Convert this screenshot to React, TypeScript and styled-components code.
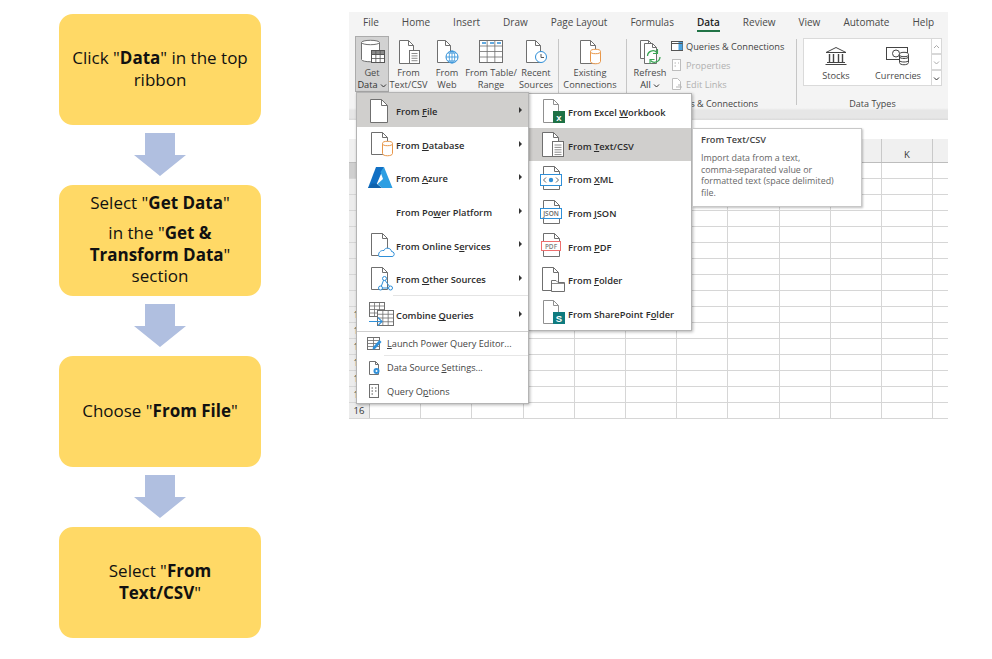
import React from "react"
import styled, { createGlobalStyle } from "styled-components"

const GlobalStyle = createGlobalStyle`
  html, body { margin: 0; padding: 0; background: #fff; }
  body { font-family: "Open Sans", "Noto Sans", sans-serif; }
`

const Page = styled.div`
  display: flex;
  align-items: flex-start;
  width: 992px;
  height: 659px;
  overflow: hidden;
  background: #fff;
`

/* flow chart */
const Flow = styled.div`
  display: flex;
  flex-direction: column;
  width: 202px;
  margin: 14px 0 0 59px;
  flex: none;
`
const StepBox = styled.div`
  height: 111px;
  padding: 0 8px 2px;
  box-sizing: border-box;
  background: #ffd966;
  border-radius: 14px;
  display: flex;
  flex-direction: column;
  justify-content: center;
  text-align: center;
  font-size: 17px;
  line-height: 21.5px;
  color: #111;
  p { margin: 0 0 8.5px; }
  p:last-child { margin: 0; }
  b { font-weight: 700; }
`
const ArrowSvg = styled.svg`
  display: block;
  width: 52px;
  height: 43px;
  margin: 8px auto 9px;
  flex: none;
`
const DownArrow = () => (
  <ArrowSvg viewBox="0 0 52 43">
    <path d="M11 0H41V22H52L26 43L0 22H11Z" fill="#b0bfe0" />
  </ArrowSvg>
)

/* excel */
const Excel = styled.div`
  position: relative;
  width: 599px;
  height: 408px;
  margin: 12px 0 0 88px;
  flex: none;
  overflow: hidden;
  background: #fff;
  color: #444;
`
const TabBar = styled.div`
  display: flex;
  gap: 23px;
  height: 24px;
  box-sizing: border-box;
  padding: 0 0 4px 14px;
  align-items: center;
  background: #f4f4f4;
  font-size: 10px;
`
const Tab = styled.span<{ $active?: boolean }>`
  position: relative;
  white-space: nowrap;
  color: ${p => (p.$active ? "#222" : "#4a4a4a")};
  font-weight: ${p => (p.$active ? 600 : 400)};
  ${p =>
    p.$active &&
    `&::after { content: ""; position: absolute; left: 0; right: 0; bottom: -3px; height: 2px; background: #217346; }`}
`
const Ribbon = styled.div`
  display: flex;
  height: 72px;
  padding-left: 6px;
  background: #f4f4f4;
`
const Group = styled.div<{ $width: number }>`
  display: flex;
  flex-direction: column;
  width: ${p => p.$width}px;
  flex: none;
`
const GroupBody = styled.div`
  display: flex;
  height: 56px;
  flex: none;
`
const GroupLabel = styled.div<{ $pad?: number; $top?: number }>`
  height: 16px;
  line-height: 16px;
  margin-top: ${p => p.$top ?? 4}px;
  text-align: center;
  font-size: 9px;
  white-space: nowrap;
  padding-right: ${p => p.$pad ?? 0}px;
  color: #444;
`
const GroupRule = styled.div<{ $mr: number; $ml: number }>`
  width: 1px;
  height: 66px;
  margin: 3px ${p => p.$mr}px 0 ${p => p.$ml}px;
  background: #c6c6c6;
  flex: none;
`
const RibbonButton = styled.div<{ $width: number; $active?: boolean }>`
  width: ${p => p.$width}px;
  flex: none;
  box-sizing: border-box;
  display: flex;
  flex-direction: column;
  align-items: center;
  padding-top: 1px;
  font-size: 9.2px;
  line-height: 12.2px;
  text-align: center;
  white-space: nowrap;
  color: #4a4a4a;
  background: ${p => (p.$active ? "#d2d2d2" : "transparent")};
  box-shadow: ${p => (p.$active ? "inset 0 0 0 1px #ababab" : "none")};
  > svg { display: block; flex: none; }
`
const DropLine = styled.div`
  display: flex;
  align-items: center;
  gap: 2px;
  color: #333;
`
const SmallCommands = styled.div`
  display: flex;
  flex-direction: column;
  gap: 3px;
  padding: 2px 0 0 2px;
`
const SmallCommand = styled.div<{ $off?: boolean }>`
  display: flex;
  align-items: center;
  gap: 2px;
  height: 17px;
  font-size: 9.2px;
  white-space: nowrap;
  color: ${p => (p.$off ? "#b0b0b0" : "#444")};
`
const Gallery = styled.div`
  display: flex;
  width: 139px;
  height: 48px;
  margin-top: 2px;
  background: #fff;
  box-shadow: inset 0 0 0 1px #dadada;
  flex: none;
`
const GalleryItem = styled.div<{ $width: number }>`
  width: ${p => p.$width}px;
  flex: none;
  display: flex;
  flex-direction: column;
  align-items: center;
  padding-top: 8px;
  font-size: 9.2px;
  line-height: 12px;
  color: #4a4a4a;
  svg { display: block; margin-bottom: 4px; }
`
const GalleryScroll = styled.div`
  margin-left: auto;
  width: 11px;
  display: flex;
  flex-direction: column;
`
const ScrollBtn = styled.div<{ $dark?: boolean }>`
  height: 16px;
  box-sizing: border-box;
  border: 1px solid #d8d8d8;
  display: flex;
  align-items: center;
  justify-content: center;
  color: ${p => (p.$dark ? "#333" : "#aaa")};
  svg { display: block; }
`
const RibbonFoot = styled.div`
  height: 12px;
  background: linear-gradient(#f4f4f4 0, #e6e6e6 20%, #e6e6e6 80%, #d9d9d9 100%);
`
const FormulaStrip = styled.div`
  height: 19px;
  background: #fff;
`
const SheetHead = styled.div`
  display: grid;
  grid-template-columns: 21px repeat(12, 51.2px);
  height: 24px;
  background: #f0f0f0;
  border-bottom: 1px solid #bdbdbd;
  box-sizing: border-box;
`
const HeadCell = styled.div`
  padding-top: 9px;
  text-align: center;
  font-size: 9.5px;
  line-height: 14px;
  color: #333;
  border-right: 1px solid #c9c9c9;
`
const SheetRow = styled.div`
  display: grid;
  grid-template-columns: 21px repeat(12, 51.2px);
  height: 16px;
  box-sizing: border-box;
  border-bottom: 1px solid #d6d6d6;
`
const RowNum = styled.div<{ $sel?: boolean }>`
  background: ${p => (p.$sel ? "#cfcfcf" : "#ececec")};
  border-right: 1px solid #c4c4c4;
  font-size: 9.5px;
  line-height: 15px;
  text-align: center;
  color: #333;
`
const Cell = styled.div`
  border-right: 1px solid #d6d6d6;
`

/* menus */
const Menu = styled.div<{ $left: number; $top: number; $width: number; $height: number }>`
  position: absolute;
  left: ${p => p.$left}px;
  top: ${p => p.$top}px;
  width: ${p => p.$width}px;
  height: ${p => p.$height}px;
  box-sizing: border-box;
  background: #fff;
  border: 1px solid #b4b4b4;
  box-shadow: 1px 1px 3px rgba(0, 0, 0, 0.3);
`
const MenuItem = styled.div<{ $on?: boolean; $pad: number }>`
  position: relative;
  display: flex;
  align-items: center;
  height: 33.6px;
  padding-left: ${p => p.$pad}px;
  background: ${p => (p.$on ? "#d0cfcd" : "transparent")};
  font-size: 9.3px;
  font-weight: 600;
  color: #2b2b2b;
  white-space: nowrap;
  svg { display: block; flex: none; }
  span { padding-top: 4px; }
`
const Caret = styled.i`
  position: absolute;
  right: 6px;
  top: 14px;
  width: 0;
  height: 0;
  border-left: 3px solid #333;
  border-top: 3px solid transparent;
  border-bottom: 3px solid transparent;
`
const ItemRule = styled.div`
  height: 1px;
  margin: 0 0 1.5px 36px;
  background: #e4e4e4;
`
const MenuFoot = styled.div`
  border-top: 1px solid #cfcfcf;
`
const FootItem = styled.div`
  display: flex;
  align-items: center;
  gap: 5px;
  height: 23.4px;
  padding-left: 9px;
  font-size: 9.2px;
  color: #444;
  white-space: nowrap;
  svg { display: block; flex: none; }
`
const FootRule = styled.div`
  height: 1px;
  margin-left: 27px;
  background: #e6e6e6;
`
const Tip = styled.div`
  position: absolute;
  left: 343px;
  top: 116px;
  width: 170px;
  height: 79px;
  box-sizing: border-box;
  padding: 4px 8px;
  background: #fff;
  border: 1px solid #c8c8c8;
  box-shadow: 1px 1px 2px rgba(0, 0, 0, 0.25);
`
const TipTitle = styled.div`
  font-size: 9.2px;
  font-weight: 600;
  line-height: 13px;
  margin-bottom: 6px;
  color: #444;
`
const TipText = styled.div`
  font-size: 8.9px;
  line-height: 11.7px;
  color: #666;
`
const Key = styled.u`
  text-underline-offset: 1px;
`

/* drawings */
const G = "#6f6f6f"
const DocShape = ({ x, y, w, h, f = 5, c = G }: { x: number; y: number; w: number; h: number; f?: number; c?: string }) => (
  <>
    <path
      d={`M${x} ${y}H${x + w - f}L${x + w} ${y + f}V${y + h}H${x}Z`}
      fill="#fff"
      stroke={c}
      strokeLinejoin="round"
    />
    <path d={`M${x + w - f} ${y}V${y + f}H${x + w}`} fill="none" stroke={c} />
  </>
)
const Cylinder = ({ x, y, w, h, c }: { x: number; y: number; w: number; h: number; c: string }) => (
  <>
    <path
      d={`M${x} ${y + 2}V${y + h - 2}C${x} ${y + h + 1} ${x + w} ${y + h + 1} ${x + w} ${y + h - 2}V${y + 2}`}
      fill="#fff"
      stroke={c}
    />
    <ellipse cx={x + w / 2} cy={y + 2} rx={w / 2} ry={2.2} fill="#fff" stroke={c} />
  </>
)
const TableShape = ({ x, y, w, h, cols, rows, c = G, head }: { x: number; y: number; w: number; h: number; cols: number; rows: number; c?: string; head?: string }) => {
  const v = Array.from({ length: cols - 1 }, (_, i) => x + ((i + 1) * w) / cols)
  const r = Array.from({ length: rows - 1 }, (_, i) => y + ((i + 1) * h) / rows)
  return (
    <>
      <rect x={x} y={y} width={w} height={h} fill="#fff" stroke={c} />
      {head && <rect x={x} y={y} width={w} height={h / rows} fill={head} stroke={c} />}
      {v.map(a => <path key={a} d={`M${a} ${y}V${y + h}`} stroke={c} strokeWidth=".8" />)}
      {r.map(a => <path key={a} d={`M${x} ${a}H${x + w}`} stroke={c} strokeWidth=".8" />)}
    </>
  )
}
const Ic = ({ children, w = 32, h = 28 }: { children: React.ReactNode; w?: number; h?: number }) => (
  <svg width={w} height={h} viewBox={`0 0 ${w} ${h}`}>{children}</svg>
)
const BLUE = "#2f8fd8"
const Lines = ({ x, y, n, w }: { x: number; y: number; n: number; w: number }) => (
  <>{Array.from({ length: n }, (_, i) => <path key={i} d={`M${x} ${y + i * 2.4}H${x + w}`} stroke={G} strokeWidth=".8" />)}</>
)

const IconFile = () => <Ic><DocShape x={6.5} y={3.5} w={17} h={23} f={6} /></Ic>
const IconDatabase = () => <Ic><DocShape x={7.5} y={3.5} w={16} h={22} f={5} /><Cylinder x={18.5} y={12.5} w={10} h={14} c="#e8974a" /></Ic>
const IconAzure = () => (
  <Ic>
    <path d="M12 4H20L11 25H4Z" fill="#1170c4" />
    <path d="M20 4L28.5 25H18L13.5 21L19 16L16.5 9Z" fill="#2d9fe3" />
    <path d="M4 25L11 25L18 25L12.5 20.5H8Z" fill="#0f62ad" />
  </Ic>
)
const IconBlank = () => <Ic>{null}</Ic>
const IconOnline = () => (
  <Ic>
    <DocShape x={7.5} y={3.5} w={16} h={22} f={5} />
    <path d="M15 26.5H28C31 26.5 31 21.5 27.5 21.5C27 17.5 21 17 20 20.5C16.5 20 13.5 23 15 26.5Z" fill="#fff" stroke={BLUE} />
  </Ic>
)
const IconOther = () => (
  <Ic>
    <DocShape x={7.5} y={3.5} w={16} h={22} f={5} />
    <path d="M20 15L17 23M20 15L26 23M17 24H26" stroke={BLUE} fill="none" />
    <circle cx="20.5" cy="14.5" r="2" fill="#fff" stroke={BLUE} />
    <circle cx="16.5" cy="24" r="2" fill="#fff" stroke={BLUE} />
    <circle cx="26.5" cy="24" r="2" fill="#fff" stroke={BLUE} />
  </Ic>
)
const IconCombine = () => (
  <Ic>
    <TableShape x={5.5} y={2.5} w={15} h={14} cols={3} rows={4} />
    <TableShape x={13.5} y={10.5} w={16} h={15} cols={3} rows={4} />
    <path d="M5 21.5H18M14 17.5L18 21.5L14 25.5" fill="none" stroke={BLUE} strokeWidth="1.1" />
  </Ic>
)
const IconExcel = () => (
  <Ic>
    <DocShape x={7.5} y={2.5} w={15} h={23} f={5} c="#909090" />
    <rect x="17" y="14" width="12" height="12" fill="#1e7145" />
    <text x="23" y="24" textAnchor="middle" fontSize="9.5" fontWeight="700" fill="#fff" fontFamily="Liberation Sans, sans-serif">x</text>
  </Ic>
)
const IconText = () => (
  <Ic>
    <DocShape x={6.5} y={2.5} w={16} h={24} f={5} />
    <rect x="16.5" y="11.5" width="11" height="15" fill="#fff" stroke={G} />
    <Lines x={18.5} y={15} n={5} w={7} />
  </Ic>
)
const IconXml = () => (
  <Ic>
    <DocShape x={7.5} y={2.5} w={16} h={23} f={5} />
    <rect x="4.5" y="10.5" width="21" height="11" fill="#fff" stroke={BLUE} />
    <circle cx="15" cy="16" r="2.2" fill={BLUE} />
    <path d="M10 13.5L7.5 16L10 18.5M20 13.5L22.5 16L20 18.5" fill="none" stroke="#555" strokeWidth=".9" />
  </Ic>
)
const IconJson = () => (
  <Ic>
    <DocShape x={7.5} y={2.5} w={16} h={23} f={5} />
    <rect x="4.5" y="10.5" width="21" height="10" fill="#fff" stroke={BLUE} />
    <text x="15" y="18" textAnchor="middle" fontSize="6.5" fill="#666" fontFamily="Open Sans, sans-serif">JSON</text>
  </Ic>
)
const IconPdf = () => (
  <Ic>
    <DocShape x={7.5} y={2.5} w={16} h={23} f={5} />
    <rect x="5.5" y="10.5" width="19" height="9" fill="#fff" stroke="#ee6f6f" />
    <text x="15" y="17.5" textAnchor="middle" fontSize="6.5" fill="#808080" fontFamily="Open Sans, sans-serif">PDF</text>
  </Ic>
)
const IconFolder = () => (
  <Ic>
    <DocShape x={6.5} y={2.5} w={16} h={23} f={5} />
    <path d="M15.5 15.5H20L22 17.5H28.5V26.5H15.5Z" fill="#fff" stroke={G} />
    <path d="M15.5 18.5H28.5" stroke={G} strokeWidth=".8" />
  </Ic>
)
const IconShare = () => (
  <Ic>
    <DocShape x={7.5} y={2.5} w={15} h={23} f={5} c="#909090" />
    <rect x="17" y="14" width="12" height="12" fill="#0f7b7f" />
    <text x="23" y="24" textAnchor="middle" fontSize="9.5" fontWeight="700" fill="#fff" fontFamily="Liberation Sans, sans-serif">S</text>
  </Ic>
)
const IconEditor = () => (
  <svg width="16" height="16" viewBox="0 0 16 16">
    <TableShape x={1.5} y={2.5} w={12} h={12} cols={2} rows={4} />
    <path d="M7 12L13.5 5L15.5 7L9 14L6.5 14.5Z" fill={BLUE} />
  </svg>
)
const IconSettings = () => (
  <svg width="16" height="16" viewBox="0 0 16 16">
    <DocShape x={3.5} y={1.5} w={9} h={13} f={3} />
    <circle cx="10.5" cy="11" r="3" fill={BLUE} />
    <circle cx="10.5" cy="11" r="1" fill="#fff" />
  </svg>
)
const IconOptions = () => (
  <svg width="16" height="16" viewBox="0 0 16 16">
    <rect x="3.5" y="1.5" width="9" height="13" fill="#fff" stroke={G} />
    <path d="M5.5 5H7M9 5H10.5M5.5 8H7M9 8H10.5M5.5 11H7" stroke="#555" />
  </svg>
)
const IconGetData = () => (
  <svg width="30" height="30" viewBox="0 0 30 30">
    <Cylinder x={4.5} y={3.5} w={18} h={21} c={G} />
    <TableShape x={14.5} y={13.5} w={13} h={12} cols={3} rows={3} c="#555" head="#8a8a8a" />
  </svg>
)
const IconTextCsv = () => (
  <svg width="30" height="30" viewBox="0 0 30 30">
    <DocShape x={5.5} y={3.5} w={14} h={23} f={5} />
    <rect x="15.5" y="13.5" width="10" height="13" fill="#fff" stroke={G} />
    <Lines x={17.5} y={16.5} n={4} w={6} />
  </svg>
)
const IconWeb = () => (
  <svg width="30" height="30" viewBox="0 0 30 30">
    <DocShape x={5.5} y={3.5} w={13} h={22} f={5} />
    <circle cx="20" cy="20" r="6" fill="#fff" stroke={BLUE} />
    <path d="M14 20H26M20 14V26M16 16H24M16 24H24" stroke={BLUE} strokeWidth=".8" />
    <ellipse cx="20" cy="20" rx="2.8" ry="6" fill="none" stroke={BLUE} strokeWidth=".8" />
  </svg>
)
const IconTable = () => (
  <svg width="30" height="30" viewBox="0 0 30 30">
    <TableShape x={3.5} y={3.5} w={23} h={22} cols={3} rows={4} />
    <path d="M6 6H10M14 6H18M21 6H25" stroke={BLUE} strokeWidth="1.6" />
  </svg>
)
const IconRecent = () => (
  <svg width="30" height="30" viewBox="0 0 30 30">
    <DocShape x={5.5} y={3.5} w={14} h={22} f={5} />
    <circle cx="20" cy="20" r="5.5" fill="#fff" stroke={BLUE} />
    <path d="M20 17V20.5H23" fill="none" stroke="#555" />
  </svg>
)
const IconExisting = () => (
  <svg width="30" height="30" viewBox="0 0 30 30">
    <DocShape x={5.5} y={3.5} w={15} h={23} f={5} />
    <Cylinder x={15.5} y={12.5} w={10} h={14} c="#e8974a" />
  </svg>
)
const IconRefresh = () => (
  <svg width="30" height="30" viewBox="0 0 30 30">
    <DocShape x={5.5} y={3.5} w={12} h={18} f={4} />
    <DocShape x={9.5} y={6.5} w={12} h={20} f={4} />
    <path d="M12.5 19A5.5 5.5 0 0 1 22 15.5M25 20A5.5 5.5 0 0 1 15.5 23.5" fill="none" stroke="#3aa655" strokeWidth="1.3" />
    <path d="M22.5 12V16.5H18M15 27V22.5H19.5" fill="none" stroke="#3aa655" strokeWidth="1.1" />
  </svg>
)
const IconQueries = () => (
  <svg width="14" height="14" viewBox="0 0 14 14">
    <rect x="1.5" y="2.5" width="11" height="9" fill="#fff" stroke="#555" />
    <rect x="8.5" y="3" width="4" height="8" fill="#4ba3e0" />
    <path d="M1.5 4.5H12.5" stroke="#555" />
  </svg>
)
const IconProps = () => (
  <svg width="14" height="14" viewBox="0 0 14 14">
    <rect x="2.5" y="1.5" width="8" height="11" fill="#fff" stroke="#bdbdbd" />
    <path d="M4.5 5H6M8 5H9M4.5 8H6" stroke="#b5b5b5" />
  </svg>
)
const IconLinks = () => (
  <svg width="14" height="14" viewBox="0 0 14 14">
    <path d="M2.5 1.5H7.5L10.5 4.5V12.5H2.5Z" fill="#fff" stroke="#bdbdbd" />
    <path d="M6 10H12M8 8H11" stroke="#b5b5b5" />
  </svg>
)
const IconBank = () => (
  <svg width="24" height="20" viewBox="0 0 24 20">
    <path d="M2 6.5L12 1.5L22 6.5Z" fill="#fff" stroke="#444" />
    <path d="M5.5 8V16M9.5 8V16M14.5 8V16M18.5 8V16" stroke="#444" strokeWidth="1.4" />
    <path d="M3 16.5H21M1.5 18.5H22.5" stroke="#444" />
  </svg>
)
const IconCurrency = () => (
  <svg width="26" height="20" viewBox="0 0 26 20">
    <rect x="1.5" y="1.5" width="21" height="12" fill="#fff" stroke="#444" />
    <circle cx="11" cy="7.5" r="3.5" fill="none" stroke="#444" />
    <Cylinder x={14.5} y={6.5} w={9} h={12} c="#444" />
    <path d="M14.5 11C15 13 23 13 23.5 11M14.5 14.5C15 16.5 23 16.5 23.5 14.5" fill="none" stroke="#444" />
  </svg>
)
const Chevron = ({ up }: { up?: boolean }) => (
  <svg width="7" height="5" viewBox="0 0 7 5">
    <path d={up ? "M1 4L3.5 1.5L6 4" : "M1 1.5L3.5 4L6 1.5"} fill="none" stroke="currentColor" />
  </svg>
)

const tabs = ["File", "Home", "Insert", "Draw", "Page Layout", "Formulas", "Data", "Review", "View", "Automate", "Help"]
const columns = "ABCDEFGHIJKL".split("")

const mainItems: [React.ReactNode, React.ReactNode][] = [
  [<IconFile />, <>From <Key>F</Key>ile</>],
  [<IconDatabase />, <>From <Key>D</Key>atabase</>],
  [<IconAzure />, <>From <Key>A</Key>zure</>],
  [<IconBlank />, <>From Po<Key>w</Key>er Platform</>],
  [<IconOnline />, <>From Online S<Key>e</Key>rvices</>],
  [<IconOther />, <>From <Key>O</Key>ther Sources</>],
]
const subItems: [React.ReactNode, React.ReactNode][] = [
  [<IconExcel />, <>From Excel <Key>W</Key>orkbook</>],
  [<IconText />, <>From <Key>T</Key>ext/CSV</>],
  [<IconXml />, <>From <Key>X</Key>ML</>],
  [<IconJson />, <>From <Key>J</Key>SON</>],
  [<IconPdf />, <>From <Key>P</Key>DF</>],
  [<IconFolder />, <>From <Key>F</Key>older</>],
  [<IconShare />, <>From SharePoint F<Key>o</Key>lder</>],
]

export default function App() {
  return (
    <Page>
      <GlobalStyle />
      <Flow>
        <StepBox><p>Click "<b>Data</b>" in the top ribbon</p></StepBox>
        <DownArrow />
        <StepBox>
          <p>Select "<b>Get Data</b>"</p>
          <p>in the "<b>Get &amp; Transform Data</b>" section</p>
        </StepBox>
        <DownArrow />
        <StepBox><p>Choose "<b>From File</b>"</p></StepBox>
        <DownArrow />
        <StepBox><p>Select "<b>From<br />Text/CSV</b>"</p></StepBox>
      </Flow>

      <Excel>
        <TabBar>
          {tabs.map(t => <Tab key={t} $active={t === "Data"}>{t}</Tab>)}
        </TabBar>
        <Ribbon>
          <Group $width={265}>
            <GroupBody>
              <RibbonButton $width={34} $active><IconGetData />Get<DropLine>Data <Chevron /></DropLine></RibbonButton>
              <RibbonButton $width={39}><IconTextCsv />From<br />Text/CSV</RibbonButton>
              <RibbonButton $width={38}><IconWeb />From<br />Web</RibbonButton>
              <RibbonButton $width={50}><IconTable />From Table/<br />Range</RibbonButton>
              <RibbonButton $width={40}><IconRecent />Recent<br />Sources</RibbonButton>
              <GroupRule $ml={2} $mr={2} />
              <RibbonButton $width={58}><IconExisting />Existing<br />Connections</RibbonButton>
            </GroupBody>
          </Group>
          <GroupRule $ml={6} $mr={5} />
          <Group $width={158}>
            <GroupBody>
              <RibbonButton $width={36}><IconRefresh />Refresh<DropLine>All <Chevron /></DropLine></RibbonButton>
              <SmallCommands>
                <SmallCommand><IconQueries />Queries &amp; Connections</SmallCommand>
                <SmallCommand $off><IconProps />Properties</SmallCommand>
                <SmallCommand $off><IconLinks />Edit Links</SmallCommand>
              </SmallCommands>
            </GroupBody>
            <GroupLabel $pad={2}>Queries &amp; Connections</GroupLabel>
          </Group>
          <GroupRule $ml={6} $mr={6} />
          <Group $width={139}>
            <Gallery>
              <GalleryItem $width={66}><IconBank />Stocks</GalleryItem>
              <GalleryItem $width={58}><IconCurrency />Currencies</GalleryItem>
              <GalleryScroll>
                <ScrollBtn><Chevron up /></ScrollBtn>
                <ScrollBtn><Chevron /></ScrollBtn>
                <ScrollBtn $dark><Chevron /></ScrollBtn>
              </GalleryScroll>
            </Gallery>
            <GroupLabel $top={10}>Data Types</GroupLabel>
          </Group>
        </Ribbon>
        <RibbonFoot />
        <FormulaStrip />
        <SheetHead>
          <HeadCell />
          {columns.map(c => <HeadCell key={c}>{c === "K" ? c : ""}</HeadCell>)}
        </SheetHead>
        {Array.from({ length: 16 }, (_, r) => (
          <SheetRow key={r}>
            <RowNum $sel={r === 0}>{r >= 9 ? r + 1 : ""}</RowNum>
            {columns.map(c => <Cell key={c} />)}
          </SheetRow>
        ))}

        <Menu $left={179} $top={81} $width={164} $height={238}>
          {subItems.map(([icon, label], i) => (
            <MenuItem key={i} $on={i === 1} $pad={7}>{icon}<span>{label}</span></MenuItem>
          ))}
        </Menu>
        <Menu $left={7} $top={80} $width={173} $height={312}>
          {mainItems.map(([icon, label], i) => (
            <MenuItem key={i} $on={i === 0} $pad={7}>{icon}<span>{label}</span><Caret /></MenuItem>
          ))}
          <ItemRule />
          <MenuItem $pad={7}><IconCombine /><span>Combine <Key>Q</Key>ueries</span><Caret /></MenuItem>
          <MenuFoot>
            <FootItem><IconEditor /><span><Key>L</Key>aunch Power Query Editor...</span></FootItem>
            <FootRule />
            <FootItem><IconSettings /><span>Data Source <Key>S</Key>ettings...</span></FootItem>
            <FootItem><IconOptions /><span>Query O<Key>p</Key>tions</span></FootItem>
          </MenuFoot>
        </Menu>
        <Tip>
          <TipTitle>From Text/CSV</TipTitle>
          <TipText>Import data from a text,<br />comma-separated value or<br />formatted text (space delimited)<br />file.</TipText>
        </Tip>
      </Excel>
    </Page>
  )
}
